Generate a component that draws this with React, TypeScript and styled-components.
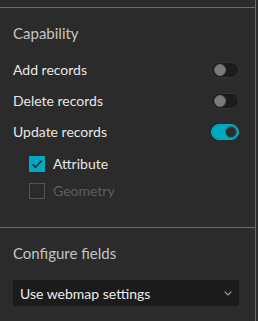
import styled, { createGlobalStyle } from "styled-components";

const GlobalStyle = createGlobalStyle`
  html, body {
    margin: 0;
    padding: 0;
    background: #2b2b2b;
  }
  body {
    font-family: "Lato", "Open Sans", sans-serif;
    -webkit-font-smoothing: antialiased;
  }
`;

const Panel = styled.div`
  width: 256px;
  min-height: 321px;
  padding-top: 7px;
  border-right: 1px solid #6b6b6b;
  box-sizing: border-box;
  background: #2b2b2b;
`;

const Section = styled.section<{ $bottom: number }>`
  border-top: 1px solid #6b6b6b;
  padding: 15px 16px ${(p) => p.$bottom}px 13px;
`;

const Heading = styled.h3`
  margin: 0;
  height: 20px;
  line-height: 20px;
  font-size: 15px;
  font-weight: 400;
  color: #c4c4c4;
`;

const Rows = styled.div`
  margin-top: 11px;
  display: flex;
  flex-direction: column;
`;

const ToggleRow = styled.label`
  height: 31px;
  display: flex;
  align-items: center;
  justify-content: space-between;
  font-size: 14px;
  color: #e6e6e6;
`;

const Track = styled.span<{ $on?: boolean }>`
  position: relative;
  width: 28px;
  height: 16px;
  border-radius: 8px;
  box-sizing: border-box;
  background: ${(p) => (p.$on ? "#00a8c0" : "#1c1c1c")};
  border: 1px solid ${(p) => (p.$on ? "#00a8c0" : "#353535")};
`;

const Knob = styled.span<{ $on?: boolean }>`
  position: absolute;
  top: 1px;
  left: ${(p) => (p.$on ? "13px" : "2px")};
  width: 12px;
  height: 12px;
  border-radius: 50%;
  box-sizing: border-box;
  background: ${(p) => (p.$on ? "#2b2b2b" : "#7a7a7a")};
  border: ${(p) => (p.$on ? "1px solid #1d6f7c" : "1px solid #6a6a6a")};
`;

const CheckList = styled.div`
  margin-top: 3px;
  display: flex;
  flex-direction: column;
`;

const CheckRow = styled.label<{ $disabled?: boolean }>`
  height: 27px;
  display: flex;
  align-items: center;
  gap: 8px;
  padding-left: 16px;
  font-size: 14px;
  color: ${(p) => (p.$disabled ? "#5e5e5e" : "#e6e6e6")};
`;

const Box = styled.span<{ $checked?: boolean }>`
  width: 16px;
  height: 16px;
  box-sizing: border-box;
  display: flex;
  align-items: center;
  justify-content: center;
  background: ${(p) => (p.$checked ? "#00a8c0" : "transparent")};
  border: 1px solid ${(p) => (p.$checked ? "#00a8c0" : "#545454")};
`;

const Select = styled.div`
  margin-top: 17px;
  height: 26px;
  width: 226px;
  box-sizing: border-box;
  padding: 0 7px 0 7px;
  display: flex;
  align-items: center;
  justify-content: space-between;
  background: #1b1b1b;
  font-size: 14px;
  color: #ececec;
`;

const Toggle = ({ on }: { on?: boolean }) => (
  <Track $on={on}>
    <Knob $on={on} />
  </Track>
);

const Check = () => (
  <svg width="12" height="12" viewBox="0 0 12 12">
    <path d="M1.5 6.2 L4.5 9.2 L10.5 2.8" fill="none" stroke="#1f2a2c" strokeWidth="1.6" />
  </svg>
);

const Chevron = () => (
  <svg width="8" height="5" viewBox="0 0 8 5">
    <path d="M0.7 0.7 L4 4 L7.3 0.7" fill="none" stroke="#a0a0a0" strokeWidth="1.1" />
  </svg>
);

export default function App() {
  return (
    <>
      <GlobalStyle />
      <Panel>
        <Section $bottom={23}>
          <Heading>Capability</Heading>
          <Rows>
            <ToggleRow>
              Add records
              <Toggle />
            </ToggleRow>
            <ToggleRow>
              Delete records
              <Toggle />
            </ToggleRow>
            <ToggleRow>
              Update records
              <Toggle on />
            </ToggleRow>
            <CheckList>
              <CheckRow>
                <Box $checked>
                  <Check />
                </Box>
                Attribute
              </CheckRow>
              <CheckRow $disabled>
                <Box />
                Geometry
              </CheckRow>
            </CheckList>
          </Rows>
        </Section>
        <Section $bottom={14}>
          <Heading>Configure fields</Heading>
          <Select>
            Use webmap settings
            <Chevron />
          </Select>
        </Section>
      </Panel>
    </>
  );
}
